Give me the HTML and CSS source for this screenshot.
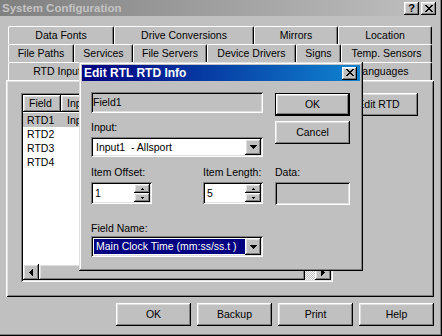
FILE: index.html
```html
<!DOCTYPE html>
<html>
<head>
<meta charset="utf-8">
<title>System Configuration</title>
<link rel="stylesheet" href="styles.css">
</head>
<body>
<div class="window">
  <div class="titlebar">
    <span class="title">System Configuration</span>
    <div class="caption-btns">
      <span class="cbtn help">?</span>
      <span class="cbtn"><svg width="8" height="7" viewBox="0 0 8 7"><path d="M0 0h2v1H0zM6 0h2v1H6zM1 1h2v1H1zM5 1h2v1H5zM2 2h4v1H2zM3 3h2v1H3zM2 4h4v1H2zM1 5h2v1H1zM5 5h2v1H5zM0 6h2v1H0zM6 6h2v1H6z" fill="#000"/></svg></span>
    </div>
  </div>

  <div class="client">
    <div class="tabctl">
      <div class="tabrow row1">
        <div class="tab">Data Fonts</div>
        <div class="tab">Drive Conversions</div>
        <div class="tab">Mirrors</div>
        <div class="tab">Location</div>
      </div>
      <div class="tabrow row2">
        <div class="tab">File Paths</div>
        <div class="tab">Services</div>
        <div class="tab">File Servers</div>
        <div class="tab">Device Drivers</div>
        <div class="tab">Signs</div>
        <div class="tab">Temp. Sensors</div>
      </div>
      <div class="tabrow row3">
        <div class="tab">RTD Input</div>
        <div class="tab"></div>
        <div class="tab"></div>
        <div class="tab">Languages</div>
      </div>
      <div class="panel">
        <div class="listview">
          <div class="lv-head">
            <div class="hcell">Field</div>
            <div class="hcell">Input</div>
            <div class="hcell"></div>
            <div class="hcell"></div>
          </div>
          <div class="lv-rows">
            <div class="lv-row selected"><span class="c1">RTD1</span><span class="cn">Input1</span><span class="cn"></span><span class="cn"></span></div>
            <div class="lv-row"><span class="c1">RTD2</span></div>
            <div class="lv-row"><span class="c1">RTD3</span></div>
            <div class="lv-row"><span class="c1">RTD4</span></div>
          </div>
          <div class="hscroll">
            <span class="sb-btn"><svg width="4" height="7" viewBox="0 0 4 7"><path d="M3 0h1v7H3zM2 1h1v5H2zM1 2h1v3H1zM0 3h1v1H0z" fill="#000"/></svg></span>
            <span class="sb-thumb"></span>
            <span class="sb-track"></span>
            <span class="sb-btn"><svg width="4" height="7" viewBox="0 0 4 7"><path d="M0 0h1v7H0zM1 1h1v5H1zM2 2h1v3H2zM3 3h1v1H3z" fill="#000"/></svg></span>
          </div>
        </div>
        <button class="btn edit-btn">Edit RTD</button>
      </div>
    </div>

    <div class="bottom-btns">
      <button class="btn">OK</button>
      <button class="btn">Backup</button>
      <button class="btn">Print</button>
      <button class="btn">Help</button>
    </div>
  </div>

  <div class="dialog">
    <div class="dlg-title">
      <span class="dlg-caption">Edit RTL RTD Info</span>
      <span class="cbtn"><svg width="8" height="7" viewBox="0 0 8 7"><path d="M0 0h2v1H0zM6 0h2v1H6zM1 1h2v1H1zM5 1h2v1H5zM2 2h4v1H2zM3 3h2v1H3zM2 4h4v1H2zM1 5h2v1H1zM5 5h2v1H5zM0 6h2v1H0zM6 6h2v1H6z" fill="#000"/></svg></span>
    </div>
    <div class="dlg-body">
      <div class="dlg-left">
        <div class="field readonly name-field">Field1</div>
        <div class="lbl lbl-input">Input:</div>
        <div class="combo input-combo">
          <span class="combo-text">Input1&nbsp;&nbsp;- Allsport</span>
          <span class="dd"><svg width="7" height="4" viewBox="0 0 7 4"><path d="M0 0h7v1H0zM1 1h5v1H1zM2 2h3v1H2zM3 3h1v1H3z" fill="#000"/></svg></span>
        </div>
        <div class="item-row">
          <div class="grp">
            <div class="lbl">Item Offset:</div>
            <div class="spin">
              <span class="spin-text">1</span>
              <span class="spin-btns">
                <span class="sp"><svg width="3" height="2" viewBox="0 0 3 2"><path d="M1 0h1v1H1zM0 1h3v1H0z" fill="#000"/></svg></span>
                <span class="sp"><svg width="3" height="2" viewBox="0 0 3 2"><path d="M0 0h3v1H0zM1 1h1v1H1z" fill="#000"/></svg></span>
              </span>
            </div>
          </div>
          <div class="grp grp-len">
            <div class="lbl">Item Length:</div>
            <div class="spin">
              <span class="spin-text">5</span>
              <span class="spin-btns">
                <span class="sp"><svg width="3" height="2" viewBox="0 0 3 2"><path d="M1 0h1v1H1zM0 1h3v1H0z" fill="#000"/></svg></span>
                <span class="sp"><svg width="3" height="2" viewBox="0 0 3 2"><path d="M0 0h3v1H0zM1 1h1v1H1z" fill="#000"/></svg></span>
              </span>
            </div>
          </div>
        </div>
        <div class="lbl lbl-fname">Field Name:</div>
        <div class="combo fname-combo">
          <span class="combo-text highlighted">Main Clock Time (mm:ss/ss.t )</span>
          <span class="dd"><svg width="7" height="4" viewBox="0 0 7 4"><path d="M0 0h7v1H0zM1 1h5v1H1zM2 2h3v1H2zM3 3h1v1H3z" fill="#000"/></svg></span>
        </div>
      </div>
      <div class="dlg-right">
        <button class="btn default ok-btn">OK</button>
        <button class="btn cancel-btn">Cancel</button>
        <div class="lbl lbl-data">Data:</div>
        <div class="field readonly data-field"></div>
      </div>
    </div>
  </div>
</div>
</body>
</html>
```
FILE: styles.css
```css
* { box-sizing: border-box; }
html, body { margin: 0; padding: 0; }
body {
  width: 442px;
  height: 336px;
  overflow: hidden;
  background: #c0c0c0;
  font-family: "Liberation Sans", Arial, sans-serif;
  font-size: 10.5px;
  line-height: 13px;
  color: #000;
}

/* bevels */
.btn, .cbtn, .hcell, .sb-btn, .sb-thumb, .dd, .sp {
  background: #c0c0c0;
  box-shadow: inset -1px -1px #000, inset 1px 1px #fff, inset -2px -2px #808080, inset 2px 2px #dfdfdf;
}

.window {
  position: relative;
  width: 442px;
  height: 336px;
  padding: 0 3px 2px 0;
  box-shadow: inset -1px -1px #000, inset -2px -2px #808080;
}

.titlebar {
  height: 16px;
  display: flex;
  align-items: center;
  justify-content: space-between;
  padding: 0 3px 0 2px;
  background: linear-gradient(90deg, #808080, #c0c0c0);
}
.titlebar .title {
  color: #c4c4c4;
  font-weight: bold;
  font-size: 11.5px;
}
.caption-btns { display: flex; gap: 2px; margin-top: 1px; }
.cbtn {
  width: 15px;
  height: 13px;
  display: flex;
  align-items: center;
  justify-content: center;
  font-weight: bold;
  font-size: 11px;
  line-height: 1;
  padding-bottom: 1px;
}

.client { padding: 10px 5px 0 6px; }

.tabrow {
  display: grid;
  margin-left: 2px;
  width: 424px;
  height: 18px;
}
.row1 { grid-template-columns: 106px 140px 84px 94px; }
.row2 { grid-template-columns: 66px 59px 74px 89px 45px 91px; }
.row3 { grid-template-columns: 98px 113px 114px 99px; }
.tab {
  height: 18px;
  display: flex;
  align-items: center;
  justify-content: center;
  border-top: 1px solid #fff;
  border-left: 1px solid #fff;
  border-right: 1px solid #000;
  border-radius: 2px 2px 0 0;
  box-shadow: inset -1px 0 #808080;
  white-space: nowrap;
  padding-bottom: 1px;
}

.panel {
  height: 217px;
  display: flex;
  align-items: flex-start;
  gap: 9px;
  padding: 13px 0 0 15px;
  box-shadow: inset 1px 1px #fff, inset -1px -1px #000, inset 2px 2px #dfdfdf, inset -2px -2px #808080;
}

.listview {
  width: 312px;
  height: 189px;
  padding: 2px;
  background: #fff;
  box-shadow: inset 1px 1px #808080, inset -1px -1px #fff, inset 2px 2px #000, inset -2px -2px #dfdfdf;
  display: flex;
  flex-direction: column;
  overflow: hidden;
}
.lv-head {
  height: 17px;
  display: grid;
  grid-template-columns: 38px 80px 70px 120px;
  flex: none;
}
.hcell {
  padding-left: 6px;
  display: flex;
  align-items: center;
  padding-bottom: 1px;
}
.lv-rows { flex: 1; padding-top: 1px; }
.lv-row {
  height: 14px;
  display: grid;
  grid-template-columns: 38px 80px 70px 120px;
  align-items: center;
}
.lv-row.selected { background: #c0c0c0; }
.lv-row .c1 { padding-left: 4px; }
.lv-row .cn { padding-left: 6px; }
.hscroll { height: 16px; display: flex; flex: none; }
.sb-btn {
  width: 16px;
  height: 16px;
  display: flex;
  align-items: center;
  justify-content: center;
}
.sb-thumb { width: 266px; height: 16px; }
.sb-track {
  flex: 1;
  background: repeating-conic-gradient(#fff 0 25%, #c0c0c0 0 50%) 0 0 / 2px 2px;
}

.btn {
  font: inherit;
  color: #000;
  border: none;
  padding: 0;
  width: 75px;
  height: 23px;
  text-align: center;
  display: block;
}
.btn.default {
  border: 1px solid #000;
}
.edit-btn { width: 76px; padding-right: 3px; }

.bottom-btns {
  display: flex;
  justify-content: flex-end;
  gap: 6px;
  margin-top: 6px;
}

/* dialog */
.dialog {
  position: absolute;
  left: 79px;
  top: 62px;
  width: 284px;
  height: 209px;
  padding: 3px;
  background: #c0c0c0;
  box-shadow: inset -1px -1px #000, inset 1px 1px #dfdfdf, inset -2px -2px #808080, inset 2px 2px #fff;
}
.dlg-title {
  height: 16px;
  display: flex;
  align-items: center;
  justify-content: space-between;
  padding: 0 3px 0 2px;
  background: linear-gradient(90deg, #000080, #1084d0);
}
.dlg-caption {
  color: #fff;
  font-weight: bold;
  font-size: 12px;
}
.dlg-body {
  display: flex;
  gap: 12px;
  padding: 11px 0 0 9px;
}
.dlg-left { width: 172px; display: flex; flex-direction: column; }
.dlg-right { width: 75px; display: flex; flex-direction: column; }

.lbl { height: 13px; white-space: nowrap; }
.field {
  box-shadow: inset 1px 1px #808080, inset -1px -1px #fff, inset 2px 2px #000, inset -2px -2px #dfdfdf;
}
.readonly { background: #c0c0c0; }
.name-field {
  height: 21px;
  padding: 0 2px;
  display: flex;
  align-items: center;
}
.lbl-input { margin-top: 8px; }
.combo {
  background: #fff;
  padding: 2px;
  display: flex;
  box-shadow: inset 1px 1px #808080, inset -1px -1px #fff, inset 2px 2px #000, inset -2px -2px #dfdfdf;
}
.input-combo { margin-top: 3px; height: 20px; }
.fname-combo { margin-top: 1px; height: 21px; }
.combo-text {
  flex: 1;
  display: flex;
  align-items: center;
  padding-left: 3px;
  white-space: nowrap;
}
.combo-text.highlighted {
  background: #000080;
  color: #fff;
  margin: 1px 0 1px 1px;
  padding-left: 2px;
}
.dd {
  width: 16px;
  display: flex;
  align-items: center;
  justify-content: center;
}

.item-row {
  margin-top: 9px;
  display: flex;
  justify-content: space-between;
}
.grp { width: 61px; display: flex; flex-direction: column; }
.grp-len { width: 60px; }
.spin {
  margin-top: 3px;
  height: 22px;
  background: #fff;
  padding: 2px;
  display: flex;
  box-shadow: inset 1px 1px #808080, inset -1px -1px #fff, inset 2px 2px #000, inset -2px -2px #dfdfdf;
}
.spin-text { flex: 1; padding-left: 2px; line-height: 18px; }
.spin-btns { width: 16px; display: flex; flex-direction: column; }
.sp {
  flex: 1;
  display: flex;
  align-items: center;
  justify-content: center;
}
.lbl-fname { margin-top: 18px; }

.ok-btn { margin-top: 1px; }
.cancel-btn { margin-top: 5px; }
.lbl-data { margin-top: 22px; }
.data-field { margin-top: 3px; height: 23px; }
```
